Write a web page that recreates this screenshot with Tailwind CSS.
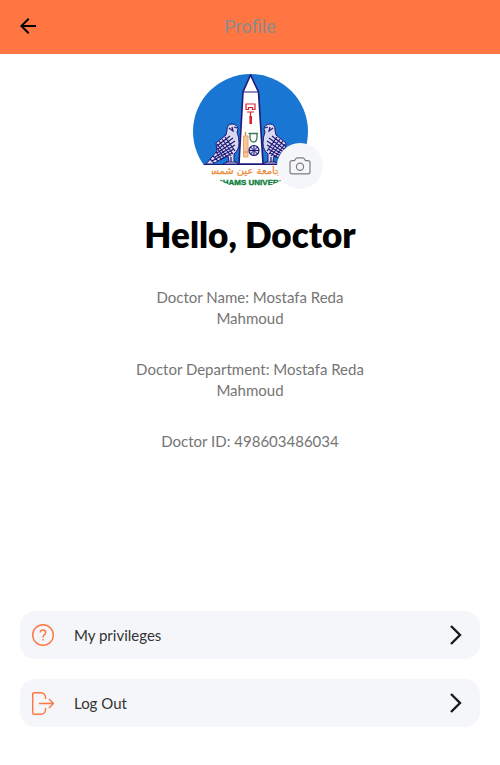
<!DOCTYPE html>
<html lang="en">
<head>
<meta charset="utf-8">
<meta name="viewport" content="width=device-width, initial-scale=1">
<title>Profile</title>
<script src="https://cdn.jsdelivr.net/npm/@tailwindcss/browser@4"></script>
</head>
<body class="flex min-h-screen flex-col bg-white font-[Lato,sans-serif]">
<header class="grid h-[54px] grid-cols-[1fr_auto_1fr] items-center bg-[#ff7643] px-4">
  <button type="button" aria-label="Back" class="size-6">
    <svg viewBox="0 0 24 24" class="size-6" fill="#000"><path d="M20 10H7.830l5.590-5.590L12 3l-8 8 8 8 1.410-1.410L7.830 12H20v-2z"/></svg>
  </button>
  <h1 class="font-[Roboto,sans-serif] text-lg text-[#8b8b8b]">Profile</h1>
</header>
<main class="flex grow flex-col px-5 pt-5 pb-[38px]">
  <div class="relative mx-auto size-[115px]">
    <svg viewBox="0 0 115 115" class="size-full rounded-full" role="img" aria-label="Ain Shams University">
      <rect width="115" height="115" fill="#fff"/>
      <rect width="115" height="90" fill="#1976d2"/>
      <path d="M57.500 1L50 18L46 90H70L65.500 18Z" fill="#fff" stroke="#201a78" stroke-width="1.600"/>
      <path d="M50 18H65.500" stroke="#201a78" stroke-width="1.200"/>
      <g fill="none" stroke="#d8232f" stroke-width="1.200"><path d="M53 30H62V35.500H59.500V33.500H55.500V35.500H53ZM54 38H61"/><path d="M57.500 38V43"/><path d="M57.700 42V50" stroke-width="2.600"/></g>
      <path d="M52.500 58V62" stroke="#e08a4a" stroke-width="1.400"/>
      <path d="M50.500 62H55V83H50.500Z" fill="#f6c79c" stroke="#e9a66c"/>
      <path d="M50.500 78H55" stroke="#e08a4a"/>
      <path d="M55.500 59.500H65M57 59.500V64Q57.500 68 60.500 68T64 64V59.500" fill="none" stroke="#3b7a57" stroke-width="1.300"/>
      <circle cx="61" cy="76.500" r="5" fill="#d6d6f0" stroke="#201a78" stroke-width="1.200"/>
      <path d="M56 76.500H66M61 71.500V81.500M57.500 73L64.500 80M64.500 73L57.500 80" stroke="#201a78"/>
      <g id="falcon">
        <path d="M34 56Q34 50 39 50Q44 50 45 55L44 58Q46 63 46 69Q46 76 41 80V87L46 90H30L36 87L35 82L30 84L20 90H13L24 77L23 69L33 61Z" fill="#d8d8ee" stroke="#201a78"/>
        <path d="M32 63L42 77M29 65L40 80M26 67L38 82M24 70L34 83M24 74L31 84M23 78L28 85M20 82L25 87M17 85L21 89M24 72L37 62M25 75L40 64M24 79L42 67M22 83L42 71M19 87L41 75M27 86L39 79M36 54L40 57L39 53M44 54L41 53M38 83V88M33 88H43" fill="none" stroke="#201a78" stroke-width="1.200"/>
      </g>
      <use href="#falcon" transform="translate(116 0) scale(-1 1)"/>
      <path d="M10 90.500H105" stroke="#201a78" stroke-width="1.200"/>
      <text x="51" y="100" text-anchor="middle" font-family="DejaVu Sans, sans-serif" font-size="10" fill="#ee8c3c" stroke="#ee8c3c" stroke-width=".3">جامعة عين شمس</text>
      <text x="56" y="111" text-anchor="middle" font-family="Liberation Sans, sans-serif" font-size="8" font-weight="700" fill="#108040" stroke="#108040" stroke-width=".4">AIN SHAMS UNIVERSITY</text>
    </svg>
    <button type="button" aria-label="Change photo" class="absolute -right-[15px] bottom-0 grid size-[46px] place-items-center rounded-full bg-[#f5f6f9]">
      <svg viewBox="0 0 22 18" class="h-[18px] w-[22px]" fill="none" stroke="#7d7d7d" stroke-width="1.200"><path d="M3 3.600H5.500L7 1.500Q7.500.8 8.400.8H13.600Q14.500.8 15 1.500L16.500 3.600H19Q21 3.600 21 5.600V14.800Q21 16.800 19 16.800H3Q1 16.800 1 14.800V5.600Q1 3.600 3 3.600Z"/><circle cx="11" cy="9.700" r="3.600"/></svg>
    </button>
  </div>
  <h2 class="mt-5 text-center text-[35px] leading-[50px] font-extrabold text-black">Hello, Doctor</h2>
  <div class="mx-auto mt-7 flex max-w-[260px] flex-col gap-[30px] text-center text-[15px] leading-[21px] text-[#757575]">
    <p>Doctor Name: Mostafa Reda<br>Mahmoud</p>
    <p>Doctor Department: Mostafa Reda<br>Mahmoud</p>
    <p>Doctor ID: 498603486034</p>
  </div>
  <nav class="mt-auto flex flex-col gap-5">
    <button type="button" class="flex h-12 items-center rounded-[15px] bg-[#f5f6f9] px-3 text-left text-[15px] text-[#333]">
      <svg viewBox="0 0 22 22" class="size-[22px]" fill="none" stroke="#ff7643" stroke-width="1.400"><circle cx="11" cy="11" r="10.300"/><path d="M8.300 8.600Q8.300 6 11 6T13.700 8.500Q13.700 10 12.200 10.800Q11 11.500 11 13V13.500M11 15V16.400"/></svg>
      <span class="ml-5 grow">My privileges</span>
      <svg viewBox="0 0 24 24" class="size-6" fill="none" stroke="#161a1d" stroke-width="2.400"><path d="M7 3L16 12L7 21"/></svg>
    </button>
    <button type="button" class="flex h-12 items-center rounded-[15px] bg-[#f5f6f9] px-3 text-left text-[15px] text-[#333]">
      <svg viewBox="0 0 22 23" class="h-[23px] w-[22px]" fill="none" stroke="#ff7643" stroke-width="1.400"><path d="M13.500 7V5Q13 1 9 .7H2Q.7.700.7 2V21Q.7 22.300 2 22.300H9Q13 22 13.500 18V16M7 11.500H21.500M17 7L21.500 11.500L17 16"/></svg>
      <span class="ml-5 grow">Log Out</span>
      <svg viewBox="0 0 24 24" class="size-6" fill="none" stroke="#161a1d" stroke-width="2.400"><path d="M7 3L16 12L7 21"/></svg>
    </button>
  </nav>
</main>
</body>
</html>
